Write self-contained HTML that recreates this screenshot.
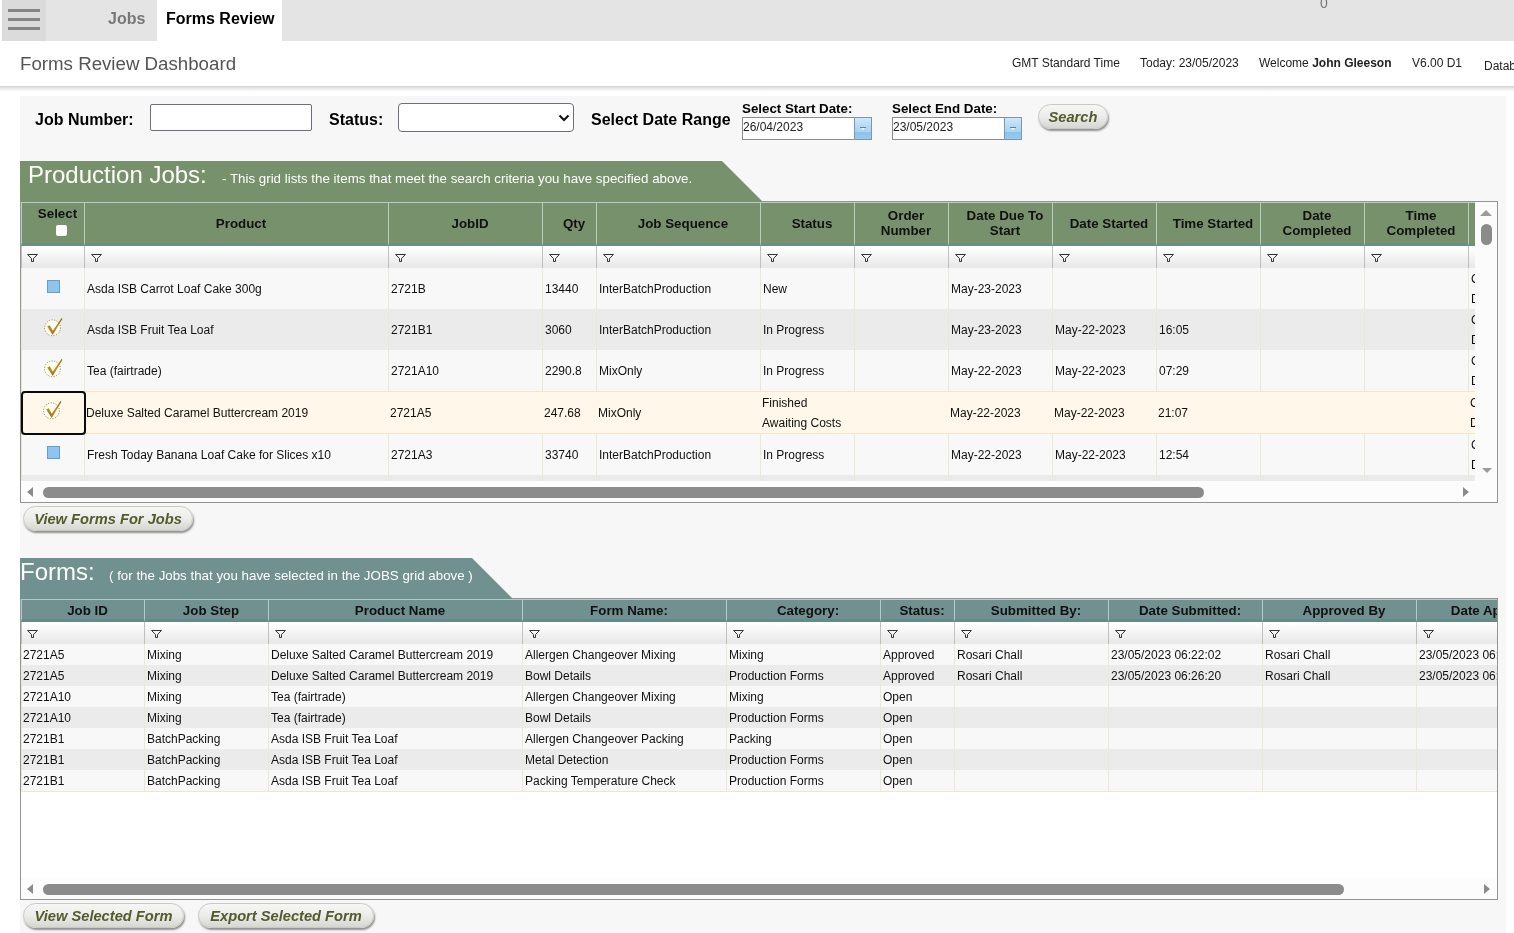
<!DOCTYPE html>
<html>
<head>
<meta charset="utf-8">
<title>Forms Review Dashboard</title>
<style>
*{box-sizing:border-box;}
html,body{margin:0;padding:0;}
body{width:1514px;height:933px;overflow:hidden;background:#fff;font-family:"Liberation Sans",sans-serif;position:relative;color:#000;}
.abs{position:absolute;}
#topbar{will-change:transform;position:absolute;left:0;top:0;width:1514px;height:41px;background:#e4e4e4;}
#ham{position:absolute;left:2px;top:0;width:44px;height:41px;background:#dbdbdb;}
#ham i{position:absolute;left:6px;width:32px;height:3px;background:#858585;}
#lw{position:absolute;left:0;top:0;width:2px;height:41px;background:#fff;}
#jobs{position:absolute;left:108px;top:10px;font-size:16px;font-weight:bold;color:#777;}
#tab{position:absolute;left:157px;top:0;width:125px;height:41px;background:#fff;font-size:16px;font-weight:bold;color:#000;padding:10px 0 0 9px;}
#zero{position:absolute;left:1320px;top:-5px;font-size:14px;color:#767676;}
#header{will-change:transform;position:absolute;left:0;top:41px;width:1514px;height:45px;background:#fff;}
#hsh{position:absolute;left:0;top:86px;width:1514px;height:6px;background:linear-gradient(#d0d0d0 0%,#e6e6e6 35%,#f6f6f6 70%,#fff 100%);}
#title{position:absolute;left:20px;top:12px;font-size:18.7px;color:#555;}
.hi{position:absolute;top:15px;font-size:12px;color:#222;white-space:nowrap;}
#content{will-change:transform;position:absolute;left:20px;top:96px;width:1485.5px;height:837px;background:#f7f7f7;}
.lbl{position:absolute;margin-top:1px;font-size:16px;font-weight:bold;color:#000;white-space:nowrap;}
.slbl{position:absolute;font-size:13.33px;font-weight:bold;color:#000;white-space:nowrap;}
.inp{position:absolute;background:#fff;border:1px solid #6e6e78;border-radius:2px;}
.dinp{position:absolute;background:#fff;border:1px solid #8c8c8c;font-size:12px;line-height:14px;color:#222;padding:2px 0 0 0;}
.dbtn{position:absolute;width:18px;height:23px;border:1px solid #7a97ae;background:linear-gradient(#cde8fb 0%,#b4daf5 40%,#aad4f3 66%,#8fc3ec 69%,#98c9ee 100%);}
.dbtn:after{content:"";position:absolute;left:5px;top:9px;width:6px;height:1px;background:#5f8199;}
.dbtn:before{content:"";position:absolute;left:6px;top:10px;border-style:solid;border-width:2px 2px 0 2px;border-color:#f4fafe transparent transparent transparent;}
.pill{position:absolute;height:25px;border-radius:13px;background:linear-gradient(#f6f6f4 0%,#ececea 50%,#d6d6d2 100%);border:1px solid #c9c9c4;box-shadow:1px 2px 2px rgba(0,0,0,.42);font-size:14.67px;font-weight:bold;font-style:italic;color:#525c2b;text-align:center;line-height:25px;white-space:nowrap;}

.ban:after{content:"";position:absolute;left:0;top:40px;height:1px;width:calc(100% + 40px);background:inherit;}
.ban{position:absolute;z-index:2;height:40px;white-space:nowrap;color:#fff;}
.bg{background:#78916d;} .bt2{background:#719090;}
.tri{position:absolute;width:0;height:0;border-style:solid;border-width:0 40px 40px 0;border-color:transparent;}
.tri.tg{border-bottom-color:#78916d;border-right-color:transparent;border-width:0 40px 40px 0;}
.tri.tt{border-bottom-color:#719090;border-right-color:transparent;border-width:0 40px 40px 0;}
.bt{position:absolute;left:8px;top:0px;font-size:24px;line-height:28px;color:#fdfff8;}
.bs{position:absolute;top:10px;font-size:13.33px;line-height:16px;color:#fff;}
.grid{position:absolute;border:1px solid #949494;background:#fbfbfb;overflow:hidden;}
.vp{position:absolute;left:0;top:0;overflow:hidden;}
table.g{border-collapse:separate;border-spacing:0;table-layout:fixed;}
table.g th{font-size:13.33px;font-weight:bold;color:#111;text-align:center;vertical-align:middle;padding:0 0 0 9px;line-height:15px;border-top:1px solid #b7cdbf;border-left:1px solid #b7cdbf;overflow:hidden;white-space:nowrap;}
table.pj th{height:44px;background:#78916d;border-bottom:3px solid #6b8f7e;}
table.fm th{padding-top:1px;height:23px;background:#719090;border-bottom:3px solid #668a8a;border-top-color:#b0cbcb;border-left-color:#b0cbcb;}
tr.f td{height:22px;background:linear-gradient(#fefefe 10%,#e9e9e9 90%);border-left:1px solid #c0c0c0;padding:0;position:relative;}
.fi{position:absolute;left:6px;top:8px;}
td:first-child .fi{left:5px;}
.sl{position:relative;top:-2px;left:0px;}
tr.r td{font-size:12px;color:#111;background:#f8f8f8;border-left:1px solid #ece8d6;padding:0 0 0 2px;white-space:nowrap;overflow:hidden;vertical-align:middle;}
tr.r.a td{background:#ebebeb;}
table.pj tr.r td{height:41px;line-height:20px;}
table.pj tr.r td:first-child{text-align:center;padding:0;position:relative;}
table.fm tr.r td{height:21px;line-height:15px;padding-top:2px;}
table.fm tr.r td:first-child{padding-left:1px;}
table.fm tr.r:last-child td{border-bottom:1px solid #ece7d4;height:22px;padding-top:2px;}
table.pj tr.sel td{height:43px;background:#fef7ea;border-top:1px solid #f9e5bd;border-bottom:1px solid #f9e5bd;border-left:0;}
table.pj tr.sel td:first-child{}
.fb{position:absolute;left:-0.2px;top:188.8px;width:65.1px;height:44px;border:2px solid #0a0a0a;border-radius:4px;}
.hc{display:inline-block;width:11px;height:11px;background:#fff;border-radius:2px;vertical-align:top;margin:2px 0 0 7px;}
.bx{position:absolute;left:25px;top:12px;width:13px;height:13px;background:#8ec5ef;border:1px solid #6a9ccb;}
.tk{position:absolute;left:19px;top:5px;}
.vs{position:absolute;right:0;top:0;width:22px;background:#fbfbfb;}
.hs{position:absolute;left:0;width:100%;height:21px;background:#fcfcfc;}
.hs .th{position:absolute;top:6px;height:11px;border-radius:5.5px;background:#8b8b8b;}
.vs .th{position:absolute;left:6px;width:11px;border-radius:6px;background:#8b8b8b;}
.lf{position:absolute;left:6px;top:6px;border-style:solid;border-width:5px 6px 5px 0;border-color:transparent #8b8b8b transparent transparent;}
.rt{position:absolute;top:6px;border-style:solid;border-width:5px 0 5px 6px;border-color:transparent transparent transparent #8b8b8b;}
.up{position:absolute;left:5px;top:8px;border-style:solid;border-width:0 6px 6px 6px;border-color:transparent transparent #9b9b9b transparent;}
.dn{position:absolute;left:7px;bottom:8px;border-style:solid;border-width:5px 5px 0 5px;border-color:#9b9b9b transparent transparent transparent;}
</style>
</head>
<body>
<div id="topbar">
  <div id="ham"><i style="top:9px"></i><i style="top:18px"></i><i style="top:27px"></i></div>
  <div id="lw"></div>
  <div id="jobs">Jobs</div>
  <div id="tab">Forms Review</div>
  <div id="zero">0</div>
</div>
<div id="header">
  <div id="title">Forms Review Dashboard</div>
  <div class="hi" style="left:1012px">GMT Standard Time</div>
  <div class="hi" style="left:1140px">Today: 23/05/2023</div>
  <div class="hi" style="left:1259px">Welcome <b>John Gleeson</b></div>
  <div class="hi" style="left:1412px">V6.00 D1</div>
  <div class="hi" style="left:1484px;top:18px">Database</div>
</div>
<div id="hsh"></div>
<div id="content">
  <div class="lbl" style="left:15px;top:14px">Job Number:</div>
  <div class="inp" style="left:130px;top:8px;width:162px;height:27px"></div>
  <div class="lbl" style="left:309px;top:14px">Status:</div>
  <div class="inp" style="left:378px;top:7px;width:176px;height:29px;border-radius:4px"><svg style="position:absolute;left:159px;top:10px" width="12" height="8" viewBox="0 0 12 8"><path d="M1.5 1.5 L6 6 L10.5 1.5" fill="none" stroke="#111" stroke-width="2"/></svg></div>
  <div class="lbl" style="left:571px;top:14px">Select Date Range</div>
  <div class="slbl" style="left:722px;top:5px">Select Start Date:</div>
  <div class="dinp" style="left:722px;top:21px;width:113px;height:23px">26/04/2023</div>
  <div class="dbtn" style="left:834px;top:21px"></div>
  <div class="slbl" style="left:872px;top:5px">Select End Date:</div>
  <div class="dinp" style="left:872px;top:21px;width:113px;height:23px">23/05/2023</div>
  <div class="dbtn" style="left:984px;top:21px"></div>
  <div class="pill" style="left:1018px;top:8px;width:70px">Search</div>

<div class="ban bg" style="left:0;top:65px;width:702px"><span class="bt">Production Jobs:</span><span class="bs" style="left:202px">- This grid lists the items that meet the search criteria you have specified above.</span></div>
<div class="tri tg" style="left:702px;top:65px"></div>
<div class="grid" style="left:0;top:105px;width:1478px;height:302px">
 <div class="vp" style="width:1454px;height:279px"><table class="g pj" style="width:1551px"><colgroup><col style="width:63px"><col style="width:304px"><col style="width:154px"><col style="width:54px"><col style="width:164px"><col style="width:94px"><col style="width:94px"><col style="width:104px"><col style="width:104px"><col style="width:104px"><col style="width:104px"><col style="width:104px"><col style="width:104px"></colgroup>
<tr class="h"><th><span class="sl">Select</span><br><span class="hc"></span></th><th>Product</th><th>JobID</th><th>Qty</th><th>Job Sequence</th><th>Status</th><th>Order<br>Number</th><th>Date Due To<br>Start</th><th>Date Started</th><th>Time Started</th><th>Date<br>Completed</th><th>Time<br>Completed</th><th></th></tr>
<tr class="f"><td><svg class="fi" width="11" height="8" viewBox="0 0 11 8"><path d="M0.6 0.5 H10.4 L6.5 4.6 V7.5 H4.5 V4.6 Z" fill="none" stroke="#333" stroke-width="1"/></svg></td><td><svg class="fi" width="11" height="8" viewBox="0 0 11 8"><path d="M0.6 0.5 H10.4 L6.5 4.6 V7.5 H4.5 V4.6 Z" fill="none" stroke="#333" stroke-width="1"/></svg></td><td><svg class="fi" width="11" height="8" viewBox="0 0 11 8"><path d="M0.6 0.5 H10.4 L6.5 4.6 V7.5 H4.5 V4.6 Z" fill="none" stroke="#333" stroke-width="1"/></svg></td><td><svg class="fi" width="11" height="8" viewBox="0 0 11 8"><path d="M0.6 0.5 H10.4 L6.5 4.6 V7.5 H4.5 V4.6 Z" fill="none" stroke="#333" stroke-width="1"/></svg></td><td><svg class="fi" width="11" height="8" viewBox="0 0 11 8"><path d="M0.6 0.5 H10.4 L6.5 4.6 V7.5 H4.5 V4.6 Z" fill="none" stroke="#333" stroke-width="1"/></svg></td><td><svg class="fi" width="11" height="8" viewBox="0 0 11 8"><path d="M0.6 0.5 H10.4 L6.5 4.6 V7.5 H4.5 V4.6 Z" fill="none" stroke="#333" stroke-width="1"/></svg></td><td><svg class="fi" width="11" height="8" viewBox="0 0 11 8"><path d="M0.6 0.5 H10.4 L6.5 4.6 V7.5 H4.5 V4.6 Z" fill="none" stroke="#333" stroke-width="1"/></svg></td><td><svg class="fi" width="11" height="8" viewBox="0 0 11 8"><path d="M0.6 0.5 H10.4 L6.5 4.6 V7.5 H4.5 V4.6 Z" fill="none" stroke="#333" stroke-width="1"/></svg></td><td><svg class="fi" width="11" height="8" viewBox="0 0 11 8"><path d="M0.6 0.5 H10.4 L6.5 4.6 V7.5 H4.5 V4.6 Z" fill="none" stroke="#333" stroke-width="1"/></svg></td><td><svg class="fi" width="11" height="8" viewBox="0 0 11 8"><path d="M0.6 0.5 H10.4 L6.5 4.6 V7.5 H4.5 V4.6 Z" fill="none" stroke="#333" stroke-width="1"/></svg></td><td><svg class="fi" width="11" height="8" viewBox="0 0 11 8"><path d="M0.6 0.5 H10.4 L6.5 4.6 V7.5 H4.5 V4.6 Z" fill="none" stroke="#333" stroke-width="1"/></svg></td><td><svg class="fi" width="11" height="8" viewBox="0 0 11 8"><path d="M0.6 0.5 H10.4 L6.5 4.6 V7.5 H4.5 V4.6 Z" fill="none" stroke="#333" stroke-width="1"/></svg></td><td></td></tr>
<tr class="r"><td><span class="bx"></span></td><td>Asda ISB Carrot Loaf Cake 300g</td><td>2721B</td><td>13440</td><td>InterBatchProduction</td><td>New</td><td></td><td>May-23-2023</td><td></td><td></td><td></td><td></td><td>C<br>D</td></tr>
<tr class="r a"><td><svg class="tk" width="24" height="24" viewBox="0 0 24 24"><defs><linearGradient id="tg" x1="0" y1="0" x2="0" y2="1"><stop offset="0" stop-color="#86700f"/><stop offset="0.55" stop-color="#b8901c"/><stop offset="1" stop-color="#b06a1e"/></linearGradient></defs><circle cx="11.5" cy="13.8" r="7.9" fill="#fffdf3" stroke="#8c7a3c" stroke-width="1" stroke-dasharray="1 1.58"/><path d="M6.2 12.6 L8.8 11.3 L11.8 16.8 L20.6 4.1 L21.5 4.7 L11.7 20.9 Z" fill="url(#tg)"/></svg></td><td>Asda ISB Fruit Tea Loaf</td><td>2721B1</td><td>3060</td><td>InterBatchProduction</td><td>In Progress</td><td></td><td>May-23-2023</td><td>May-22-2023</td><td>16:05</td><td></td><td></td><td>C<br>D</td></tr>
<tr class="r"><td><svg class="tk" width="24" height="24" viewBox="0 0 24 24"><circle cx="11.5" cy="13.8" r="7.9" fill="#fffdf3" stroke="#8c7a3c" stroke-width="1" stroke-dasharray="1 1.58"/><path d="M6.2 12.6 L8.8 11.3 L11.8 16.8 L20.6 4.1 L21.5 4.7 L11.7 20.9 Z" fill="url(#tg)"/></svg></td><td>Tea (fairtrade)</td><td>2721A10</td><td>2290.8</td><td>MixOnly</td><td>In Progress</td><td></td><td>May-22-2023</td><td>May-22-2023</td><td>07:29</td><td></td><td></td><td>C<br>D</td></tr>
<tr class="r sel"><td><svg class="tk" width="24" height="24" viewBox="0 0 24 24"><circle cx="11.5" cy="13.8" r="7.9" fill="#fffdf3" stroke="#8c7a3c" stroke-width="1" stroke-dasharray="1 1.58"/><path d="M6.2 12.6 L8.8 11.3 L11.8 16.8 L20.6 4.1 L21.5 4.7 L11.7 20.9 Z" fill="url(#tg)"/></svg></td><td>Deluxe Salted Caramel Buttercream 2019</td><td>2721A5</td><td>247.68</td><td>MixOnly</td><td>Finished<br>Awaiting Costs</td><td></td><td>May-22-2023</td><td>May-22-2023</td><td>21:07</td><td></td><td></td><td>C<br>D</td></tr>
<tr class="r"><td><span class="bx"></span></td><td>Fresh Today Banana Loaf Cake for Slices x10</td><td>2721A3</td><td>33740</td><td>InterBatchProduction</td><td>In Progress</td><td></td><td>May-22-2023</td><td>May-22-2023</td><td>12:54</td><td></td><td></td><td>C<br>D</td></tr>
<tr class="r a"><td></td><td></td><td></td><td></td><td></td><td></td><td></td><td></td><td></td><td></td><td></td><td></td><td></td></tr>
</table><div class="fb"></div></div>
 <div class="vs" style="height:279px"><i class="up"></i><i class="th" style="top:22px;height:21px"></i><i class="dn"></i></div>
 <div class="hs" style="top:279px"><i class="lf"></i><i class="th" style="left:22px;width:1161px"></i><i class="rt" style="left:1442px"></i></div>
</div>
<div class="pill" style="left:3px;top:410px;width:170px">View Forms For Jobs</div>


<div class="ban bt2" style="left:0;top:462px;width:452px"><span class="bt" style="left:0">Forms:</span><span class="bs" style="left:89px">( for the Jobs that you have selected in the JOBS grid above )</span></div>
<div class="tri tt" style="left:452px;top:462px"></div>
<div class="grid" style="left:0;top:502px;width:1478px;height:302px;background:#fff">
 <div class="vp" style="width:1476px;height:279px"><table class="g fm" style="width:1549px"><colgroup><col style="width:123px"><col style="width:124px"><col style="width:254px"><col style="width:204px"><col style="width:154px"><col style="width:74px"><col style="width:154px"><col style="width:154px"><col style="width:154px"><col style="width:154px"></colgroup>
<tr class="h"><th>Job ID</th><th>Job Step</th><th>Product Name</th><th>Form Name:</th><th>Category:</th><th>Status:</th><th>Submitted By:</th><th>Date Submitted:</th><th>Approved By</th><th>Date Approved</th></tr>
<tr class="f"><td><svg class="fi" width="11" height="8" viewBox="0 0 11 8"><path d="M0.6 0.5 H10.4 L6.5 4.6 V7.5 H4.5 V4.6 Z" fill="none" stroke="#333" stroke-width="1"/></svg></td><td><svg class="fi" width="11" height="8" viewBox="0 0 11 8"><path d="M0.6 0.5 H10.4 L6.5 4.6 V7.5 H4.5 V4.6 Z" fill="none" stroke="#333" stroke-width="1"/></svg></td><td><svg class="fi" width="11" height="8" viewBox="0 0 11 8"><path d="M0.6 0.5 H10.4 L6.5 4.6 V7.5 H4.5 V4.6 Z" fill="none" stroke="#333" stroke-width="1"/></svg></td><td><svg class="fi" width="11" height="8" viewBox="0 0 11 8"><path d="M0.6 0.5 H10.4 L6.5 4.6 V7.5 H4.5 V4.6 Z" fill="none" stroke="#333" stroke-width="1"/></svg></td><td><svg class="fi" width="11" height="8" viewBox="0 0 11 8"><path d="M0.6 0.5 H10.4 L6.5 4.6 V7.5 H4.5 V4.6 Z" fill="none" stroke="#333" stroke-width="1"/></svg></td><td><svg class="fi" width="11" height="8" viewBox="0 0 11 8"><path d="M0.6 0.5 H10.4 L6.5 4.6 V7.5 H4.5 V4.6 Z" fill="none" stroke="#333" stroke-width="1"/></svg></td><td><svg class="fi" width="11" height="8" viewBox="0 0 11 8"><path d="M0.6 0.5 H10.4 L6.5 4.6 V7.5 H4.5 V4.6 Z" fill="none" stroke="#333" stroke-width="1"/></svg></td><td><svg class="fi" width="11" height="8" viewBox="0 0 11 8"><path d="M0.6 0.5 H10.4 L6.5 4.6 V7.5 H4.5 V4.6 Z" fill="none" stroke="#333" stroke-width="1"/></svg></td><td><svg class="fi" width="11" height="8" viewBox="0 0 11 8"><path d="M0.6 0.5 H10.4 L6.5 4.6 V7.5 H4.5 V4.6 Z" fill="none" stroke="#333" stroke-width="1"/></svg></td><td><svg class="fi" width="11" height="8" viewBox="0 0 11 8"><path d="M0.6 0.5 H10.4 L6.5 4.6 V7.5 H4.5 V4.6 Z" fill="none" stroke="#333" stroke-width="1"/></svg></td></tr>
<tr class="r"><td>2721A5</td><td>Mixing</td><td>Deluxe Salted Caramel Buttercream 2019</td><td>Allergen Changeover Mixing</td><td>Mixing</td><td>Approved</td><td>Rosari Chall</td><td>23/05/2023 06:22:02</td><td>Rosari Chall</td><td>23/05/2023 06:24:11</td></tr>
<tr class="r a"><td>2721A5</td><td>Mixing</td><td>Deluxe Salted Caramel Buttercream 2019</td><td>Bowl Details</td><td>Production Forms</td><td>Approved</td><td>Rosari Chall</td><td>23/05/2023 06:26:20</td><td>Rosari Chall</td><td>23/05/2023 06:28:40</td></tr>
<tr class="r"><td>2721A10</td><td>Mixing</td><td>Tea (fairtrade)</td><td>Allergen Changeover Mixing</td><td>Mixing</td><td>Open</td><td></td><td></td><td></td><td></td></tr>
<tr class="r a"><td>2721A10</td><td>Mixing</td><td>Tea (fairtrade)</td><td>Bowl Details</td><td>Production Forms</td><td>Open</td><td></td><td></td><td></td><td></td></tr>
<tr class="r"><td>2721B1</td><td>BatchPacking</td><td>Asda ISB Fruit Tea Loaf</td><td>Allergen Changeover Packing</td><td>Packing</td><td>Open</td><td></td><td></td><td></td><td></td></tr>
<tr class="r a"><td>2721B1</td><td>BatchPacking</td><td>Asda ISB Fruit Tea Loaf</td><td>Metal Detection</td><td>Production Forms</td><td>Open</td><td></td><td></td><td></td><td></td></tr>
<tr class="r"><td>2721B1</td><td>BatchPacking</td><td>Asda ISB Fruit Tea Loaf</td><td>Packing Temperature Check</td><td>Production Forms</td><td>Open</td><td></td><td></td><td></td><td></td></tr>
</table></div>
 <div class="hs" style="top:279px"><i class="lf"></i><i class="th" style="left:22px;width:1301px"></i><i class="rt" style="left:1463px"></i></div>
</div>
<div class="pill" style="left:3px;top:807px;width:161px">View Selected Form</div>
<div class="pill" style="left:178px;top:807px;width:176px">Export Selected Form</div>

</div>
</body>
</html>
